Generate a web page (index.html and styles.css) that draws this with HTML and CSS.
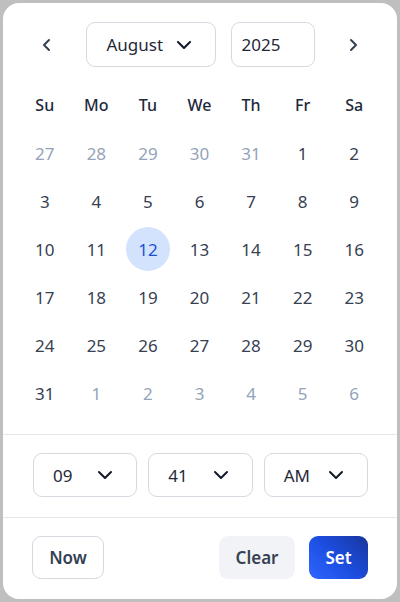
FILE: index.html
```html
<!DOCTYPE html>
<html>
<head>
<meta charset="utf-8">
<link rel="stylesheet" href="styles.css">
</head>
<body>
<div class="card">
  <div class="header">
    <button class="nav" aria-label="Previous month">
      <svg width="16" height="16" viewBox="0 0 16 16"><path d="M10 3 L5 8 L10 13" fill="none" stroke="#334155" stroke-width="2" stroke-linecap="round" stroke-linejoin="round"/></svg>
    </button>
    <div class="selects">
      <div class="box month"><span>August</span>
        <svg class="chev" width="16" height="10" viewBox="0 0 16 10"><path d="M2 2 L8 8 L14 2" fill="none" stroke="#111827" stroke-width="2" stroke-linecap="round" stroke-linejoin="round"/></svg>
      </div>
      <div class="box year"><span>2025</span></div>
    </div>
    <button class="nav" aria-label="Next month">
      <svg width="16" height="16" viewBox="0 0 16 16"><path d="M6 3 L11 8 L6 13" fill="none" stroke="#334155" stroke-width="2" stroke-linecap="round" stroke-linejoin="round"/></svg>
    </button>
  </div>

  <div class="grid">
    <div class="wd">Su</div><div class="wd">Mo</div><div class="wd">Tu</div><div class="wd">We</div><div class="wd">Th</div><div class="wd">Fr</div><div class="wd">Sa</div>
    <div class="day out">27</div><div class="day out">28</div><div class="day out">29</div><div class="day out">30</div><div class="day out">31</div><div class="day">1</div><div class="day">2</div>
    <div class="day">3</div><div class="day">4</div><div class="day">5</div><div class="day">6</div><div class="day">7</div><div class="day">8</div><div class="day">9</div>
    <div class="day">10</div><div class="day">11</div><div class="day sel"><span>12</span></div><div class="day">13</div><div class="day">14</div><div class="day">15</div><div class="day">16</div>
    <div class="day">17</div><div class="day">18</div><div class="day">19</div><div class="day">20</div><div class="day">21</div><div class="day">22</div><div class="day">23</div>
    <div class="day">24</div><div class="day">25</div><div class="day">26</div><div class="day">27</div><div class="day">28</div><div class="day">29</div><div class="day">30</div>
    <div class="day">31</div><div class="day out">1</div><div class="day out">2</div><div class="day out">3</div><div class="day out">4</div><div class="day out">5</div><div class="day out">6</div>
  </div>

  <div class="time">
    <div class="box tsel"><span>09</span>
      <svg class="chev" width="16" height="10" viewBox="0 0 16 10"><path d="M2 2 L8 8 L14 2" fill="none" stroke="#111827" stroke-width="2" stroke-linecap="round" stroke-linejoin="round"/></svg>
    </div>
    <div class="box tsel"><span>41</span>
      <svg class="chev" width="16" height="10" viewBox="0 0 16 10"><path d="M2 2 L8 8 L14 2" fill="none" stroke="#111827" stroke-width="2" stroke-linecap="round" stroke-linejoin="round"/></svg>
    </div>
    <div class="box tsel"><span>AM</span>
      <svg class="chev" width="16" height="10" viewBox="0 0 16 10"><path d="M2 2 L8 8 L14 2" fill="none" stroke="#111827" stroke-width="2" stroke-linecap="round" stroke-linejoin="round"/></svg>
    </div>
  </div>

  <div class="footer">
    <button class="btn now">Now</button>
    <div class="actions">
      <button class="btn clear">Clear</button>
      <button class="btn set">Set</button>
    </div>
  </div>
</div>
</body>
</html>
```

FILE: styles.css
```css
* { box-sizing: border-box; }
html, body { margin: 0; padding: 0; }
body {
  background: #bfbfbf;
  width: 400px;
  height: 602px;
  font-family: "Noto Sans", "Open Sans", sans-serif;
  color: #334155;
  padding: 3px;
}
.card {
  background: #fff;
  width: 394px;
  height: 596px;
  border-radius: 16px;
  overflow: hidden;
}
.header {
  display: flex;
  align-items: center;
  justify-content: space-between;
  padding: 19px 24px 0 24px;
}
.nav {
  width: 40px;
  height: 40px;
  border: none;
  background: transparent;
  padding: 0;
  display: flex;
  align-items: center;
  justify-content: center;
}
.selects {
  display: flex;
  gap: 15px;
}
.box {
  height: 45px;
  border: 1px solid #d6d9e0;
  border-radius: 9px;
  display: flex;
  align-items: center;
  font-size: 17px;
  color: #1f2937;
  background: #fff;
}
.month {
  width: 130px;
  padding: 0 23px 0 20px;
  justify-content: space-between;
}
.year {
  width: 84px;
  padding: 0 10px;
}
.grid {
  display: grid;
  grid-template-columns: repeat(7, 1fr);
  row-gap: 4px;
  padding: 16px 17px 19px 16px;
  border-bottom: 1px solid #e5e7eb;
}
.wd, .day {
  height: 44px;
  display: flex;
  align-items: center;
  justify-content: center;
}
.wd {
  font-size: 16px;
  font-weight: 500;
  color: #1e293b;
}
.day {
  font-size: 17px;
  color: #374151;
}
.day.out { color: #94a3b8; }
.day.sel span {
  width: 44px;
  height: 44px;
  border-radius: 50%;
  background: #d3e2fd;
  color: #1d4ed8;
  display: flex;
  align-items: center;
  justify-content: center;
}
.time {
  display: grid;
  grid-template-columns: repeat(3, 1fr);
  gap: 11px;
  padding: 18px 29px 20px 30px;
  border-bottom: 1px solid #e5e7eb;
}
.tsel {
  height: 44px;
  padding: 0 23px 0 19px;
  justify-content: space-between;
}
.footer {
  display: flex;
  justify-content: space-between;
  align-items: center;
  padding: 18px 29px 0 29px;
}
.actions {
  display: flex;
  gap: 14px;
}
.btn {
  height: 43px;
  border-radius: 9px;
  font-family: "Noto Sans", "Open Sans", sans-serif;
  font-size: 17px;
  font-weight: 600;
  padding: 0;
}
.now {
  width: 72px;
  background: #fff;
  border: 1px solid #d6d9e0;
  color: #334155;
}
.clear {
  width: 76px;
  background: #f1f3f7;
  border: none;
  color: #374151;
}
.set {
  width: 59px;
  border: none;
  color: #fff;
  background: linear-gradient(45deg, #2f66ff 0%, #1d4fe3 45%, #1a3fb8 80%, #173393 100%);
}
```
